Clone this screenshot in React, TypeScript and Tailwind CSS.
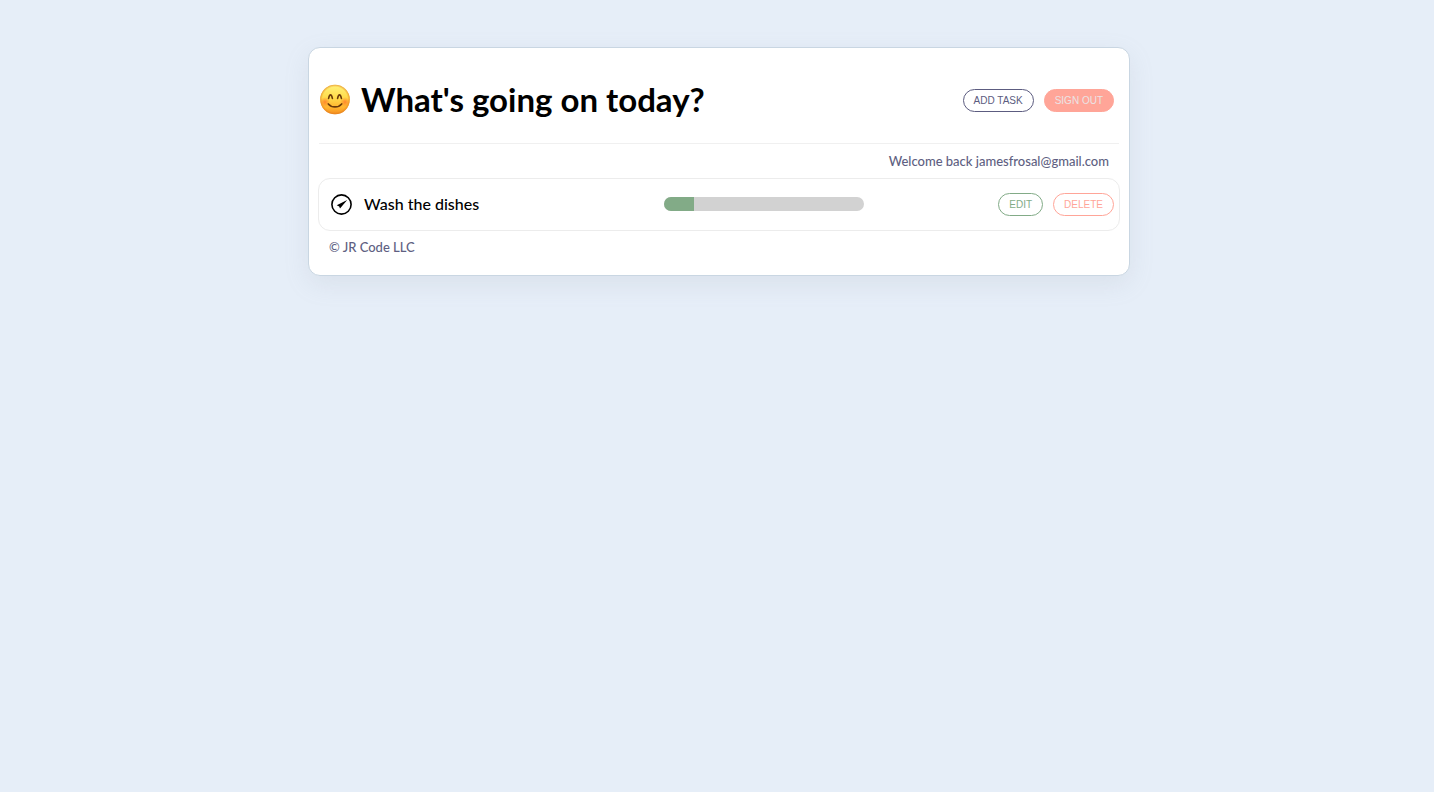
import type { ReactNode } from "react";

type Task = { id: number; title: string; progress: number };

const tasks: Task[] = [{ id: 1, title: "Wash the dishes", progress: 15 }];

const tones = {
  plain: "border-[#5c5c80] text-[#5c5c80]",
  solid: "border-[#ffa598] bg-[#ffa598] text-[#ebe3e4]",
  edit: "border-[#82ab87] text-[#82ab87]",
  remove: "border-[#ffa598] text-[#ffa598]",
};

function PillButton({ tone, children }: { tone: keyof typeof tones; children: ReactNode }) {
  return (
    <button
      type="button"
      className={`h-[23px] cursor-pointer rounded-full border px-[10px] font-['Liberation_Sans',sans-serif] text-[10px] leading-[21px] whitespace-nowrap uppercase ${tones[tone]}`}
    >
      {children}
    </button>
  );
}

function SmileIcon() {
  return (
    <svg className="size-8 shrink-0" viewBox="0 0 32 32" aria-hidden="true">
      <defs>
        <linearGradient id="face" x1="0" y1="0" x2="0" y2="1">
          <stop offset="0" stopColor="#fff27a" />
          <stop offset="0.45" stopColor="#ffdb4a" />
          <stop offset="0.8" stopColor="#ffb02c" />
          <stop offset="1" stopColor="#f38c20" />
        </linearGradient>
        <radialGradient id="edge">
          <stop offset="0.84" stopColor="#f08a1c" stopOpacity="0" />
          <stop offset="1" stopColor="#dc781c" stopOpacity="0.65" />
        </radialGradient>
        <radialGradient id="cheek">
          <stop offset="0" stopColor="#ff6322" stopOpacity="0.65" />
          <stop offset="1" stopColor="#ff6a22" stopOpacity="0" />
        </radialGradient>
      </defs>
      <circle cx="16" cy="15.500" r="14.800" fill="url(#face)" />
      <circle cx="16" cy="15.500" r="14.800" fill="url(#edge)" />
      <circle cx="6" cy="18" r="5" fill="url(#cheek)" />
      <circle cx="26" cy="18" r="5" fill="url(#cheek)" />
      <g fill="none" stroke="#6b3a0a" strokeLinecap="round" strokeLinejoin="round" strokeWidth="1.600">
        <path d="M9.600 14.400c.5-2.300 1.100-3.500 1.900-3.500s1.400 1.200 1.900 3.500" />
        <path d="M18.600 14.400c.5-2.300 1.100-3.500 1.900-3.500s1.400 1.200 1.900 3.500" />
        <path d="M9.300 19.900c1.700 2 4.100 3 6.700 3s5-1 6.700-3" />
      </g>
    </svg>
  );
}

function TickIcon() {
  return (
    <svg className="size-[21px] shrink-0" viewBox="0 0 21 21" aria-hidden="true">
      <circle cx="10.500" cy="10.500" r="9.600" fill="none" stroke="#000" strokeWidth="1.600" />
      <path d="M16.200 6 9 14.500 8.200 12.400 5.700 11.300Z" fill="#000" />
    </svg>
  );
}

function ProgressBar({ value, label }: { value: number; label: string }) {
  return (
    <div
      role="progressbar"
      aria-label={label}
      aria-valuenow={value}
      aria-valuemin={0}
      aria-valuemax={100}
      className="h-[14px] w-[200px] overflow-hidden rounded-full bg-[#d2d2d2]"
    >
      <div className="h-full bg-[#82ab87]" style={{ width: `${value}%` }} />
    </div>
  );
}

export default function App() {
  return (
    <div className="min-h-screen bg-[#e6eef8] pt-[47px] pl-1 font-['Trebuchet_MS','Lato',sans-serif] text-black">
      <main className="mx-auto max-w-[822px] rounded-xl border border-[#c9d6e2] bg-white px-[10px] pt-2 pb-[18px] shadow-[0_8px_24px_rgba(149,157,165,0.15)]">
        <header className="flex items-center justify-between border-b border-[#f0f0f0] pt-6 pr-[5px] pb-[22px]">
          <h1 className="flex items-center gap-[10px] pb-[2px] text-[33px] leading-[39px] font-bold">
            <SmileIcon />
            What's going on today?
          </h1>
          <div className="flex gap-[10px]">
            <PillButton tone="plain">Add task</PillButton>
            <PillButton tone="solid">Sign out</PillButton>
          </div>
        </header>
        <p className="mt-[7px] pr-[10px] text-right text-[13px] leading-5 font-medium text-[#605f82]">Welcome back jamesfrosal@gmail.com</p>
        <ul className="mt-[7px] -mx-px">
          {tasks.map((task) => (
            <li key={task.id} className="flex h-[53px] items-center justify-between rounded-xl border border-[#ececec] pr-[5px] pb-px pl-3">
              <div className="flex flex-1 items-center gap-3">
                <TickIcon />
                <span className="text-base font-medium">{task.title}</span>
              </div>
              <ProgressBar value={task.progress} label={task.title} />
              <div className="flex w-[250px] justify-end gap-[10px]">
                <PillButton tone="edit">Edit</PillButton>
                <PillButton tone="remove">Delete</PillButton>
              </div>
            </li>
          ))}
        </ul>
        <footer className="mt-[6px] pl-[10px] text-[13px] leading-5 font-medium text-[#605f82]">© JR Code LLC</footer>
      </main>
    </div>
  );
}
